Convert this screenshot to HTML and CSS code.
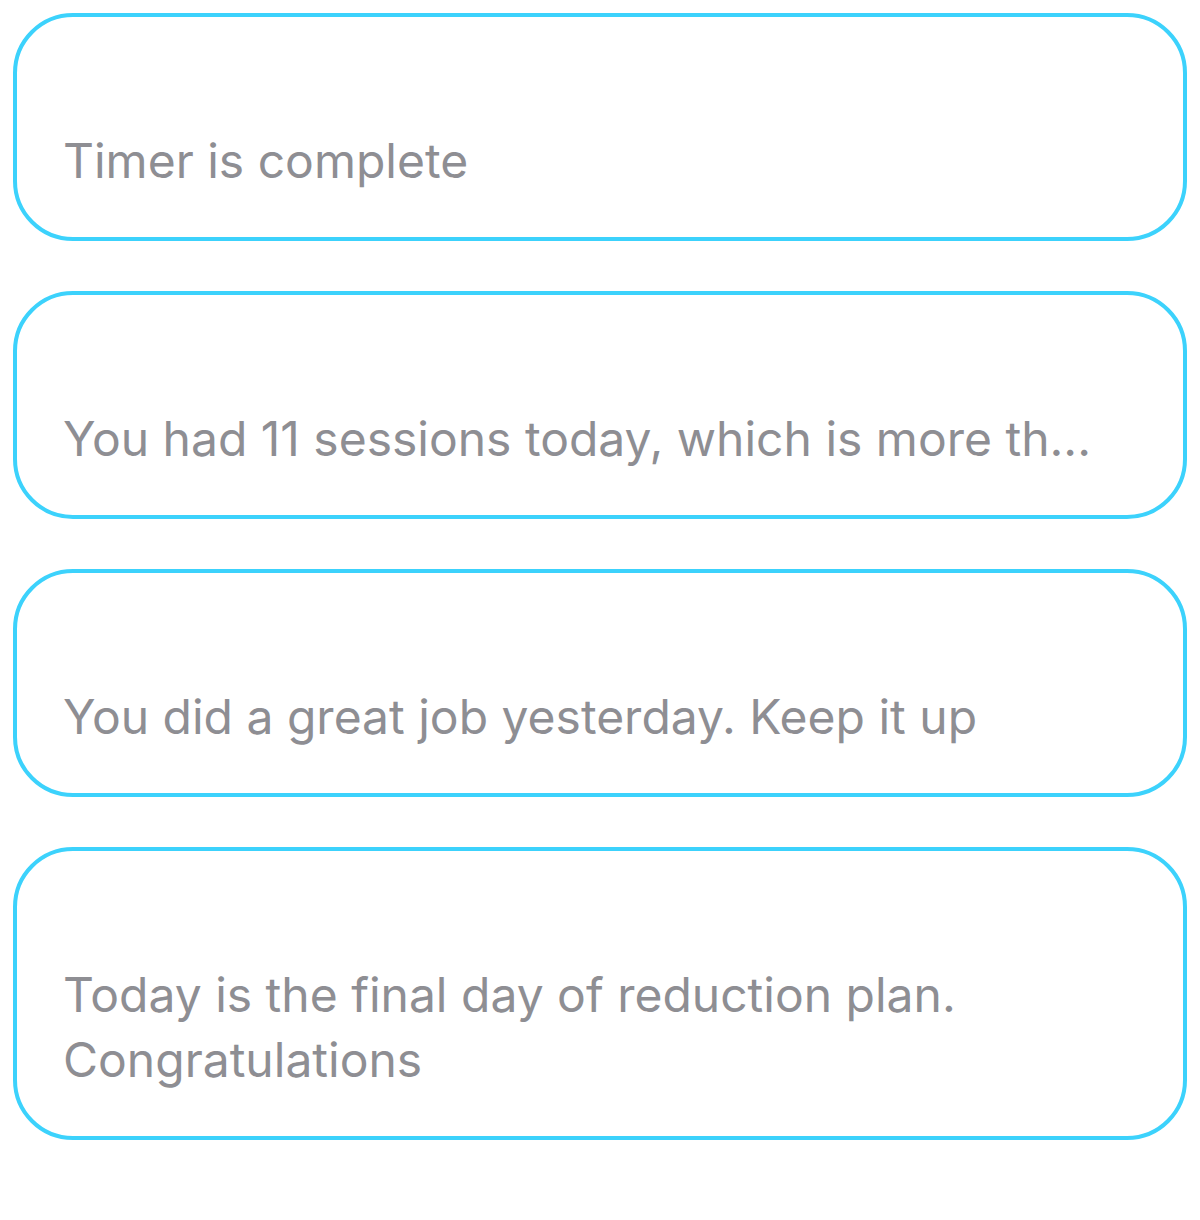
FILE: index.html
```html
<!DOCTYPE html>
<html lang="en">
<head>
    <meta charset="UTF-8">
    <meta name="viewport" content="width=device-width, initial-scale=1.0">
    <title>Notifications</title>
    <link rel="stylesheet" href="styles.css">
</head>
<body>
    <div class="list">
        <div class="note">
            <p class="msg">Timer is complete</p>
        </div>
        <div class="note">
            <p class="msg">You had 11 sessions today, which is more th...</p>
        </div>
        <div class="note">
            <p class="msg">You did a great job yesterday. Keep it up</p>
        </div>
        <div class="note">
            <p class="msg">Today is the final day of reduction plan. Congratulations</p>
        </div>
    </div>
</body>
</html>
```

FILE: styles.css
```css
body {
    margin: 13px;
    background-color: #fff;
    font-family: Inter, "Noto Sans", sans-serif;
}
.list {
    display: flex;
    flex-direction: column;
    gap: 50px;
}
.note {
    border: 4px solid #3cd2fc;
    border-radius: 60px;
    padding: 111px 46px 44px;
}
.msg {
    margin: 0;
    color: #8e8e93;
    font-size: 48px;
    line-height: 65px;
}
```
